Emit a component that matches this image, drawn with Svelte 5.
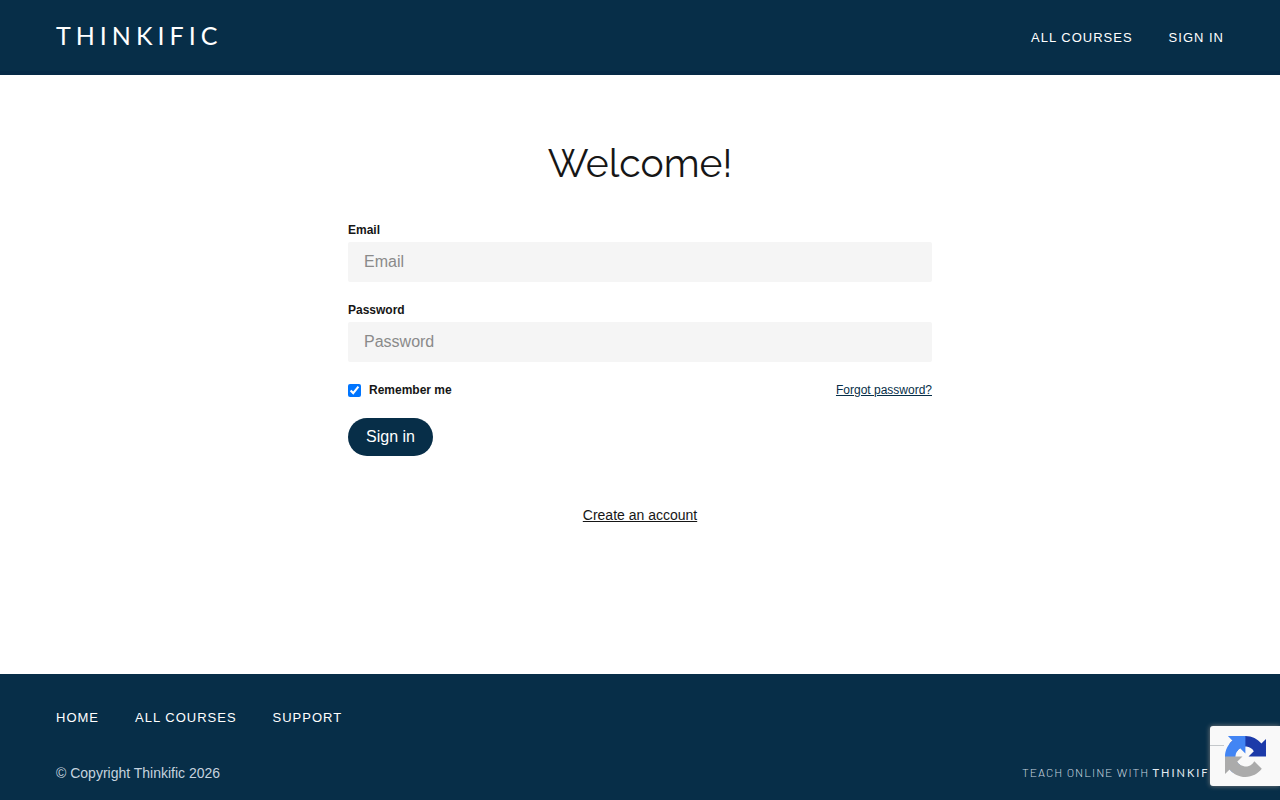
<script>
  const headerLinks = ["All Courses", "Sign In"];
  const footerLinks = ["Home", "All Courses", "Support"];

  let email = $state("");
  let password = $state("");
  let remember = $state(true);
</script>

<div class="page">
  <header class="header">
    <a class="logo" href="/">THINKIFIC</a>
    <nav class="nav">
      {#each headerLinks as link}
        <a href="/">{link}</a>
      {/each}
    </nav>
  </header>

  <main class="main">
    <h1>Welcome!</h1>

    <form class="form" onsubmit={(e) => e.preventDefault()}>
      <div class="field">
        <label for="email">Email</label>
        <input id="email" type="email" placeholder="Email" bind:value={email} />
      </div>
      <div class="field">
        <label for="password">Password</label>
        <input id="password" type="password" placeholder="Password" bind:value={password} />
      </div>
      <div class="options">
        <label class="remember" for="remember">
          <input id="remember" type="checkbox" bind:checked={remember} />
          Remember me
        </label>
        <a class="forgot" href="/">Forgot password?</a>
      </div>
      <button class="submit" type="submit">Sign in</button>
    </form>

    <a class="create" href="/">Create an account</a>
  </main>

  <footer class="footer">
    <nav class="nav">
      {#each footerLinks as link}
        <a href="/">{link}</a>
      {/each}
    </nav>
    <div class="footer-bottom">
      <span class="copyright">© Copyright Thinkific 2026</span>
      <a class="powered" href="/">Teach online with <strong>THINKIFIC</strong></a>
    </div>
  </footer>
</div>

<div class="captcha">
  <svg viewBox="0 0 64 64" width="41" height="41" aria-hidden="true">
    <path fill="#1c3aa9" d="M64 31.955l-.033-1.37V4.687l-7.16 7.16C50.948 4.674 42.033.093 32.05.093c-10.4 0-19.622 4.96-25.458 12.64l11.736 11.86a15.55 15.55 0 0 1 4.754-5.334c2.05-1.6 4.952-2.906 8.968-2.906.485 0 .86.057 1.135.163 4.976.393 9.288 3.14 11.828 7.124l-8.307 8.307L64 31.953" />
    <path fill="#4285f4" d="M31.862.094l-1.37.033H4.594l7.16 7.16C4.58 13.147 0 22.06 0 32.046c0 10.4 4.96 19.622 12.64 25.458L24.5 45.768a15.55 15.55 0 0 1-5.334-4.754c-1.6-2.05-2.906-4.952-2.906-8.968 0-.485.057-.86.163-1.135.393-4.976 3.14-9.288 7.124-11.828l8.307 8.307L31.86.095" />
    <path fill="#ababab" d="M.001 32.045l.033 1.37v25.898l7.16-7.16c5.86 7.173 14.774 11.754 24.76 11.754 10.4 0 19.622-4.96 25.458-12.64l-11.736-11.86a15.55 15.55 0 0 1-4.754 5.334c-2.05 1.6-4.952 2.906-8.968 2.906-.485 0-.86-.057-1.135-.163-4.976-.393-9.288-3.14-11.828-7.124l8.307-8.307c-10.522.04-22.4.066-27.295-.005" />
  </svg>
</div>

<style>
  :global(body) {
    background: #fff;
    color: #161616;
    font-family: "Liberation Sans", Arial, sans-serif;
  }

  .page {
    display: flex;
    flex-direction: column;
    min-height: 100vh;
  }

  .header {
    display: flex;
    justify-content: space-between;
    align-items: flex-start;
    padding: 20px 56px;
    border-bottom: 4px solid #062a46;
    background: #072e48;
  }

  .header .nav {
    padding-top: 8px;
  }

  .logo {
    color: #fff;
    font-family: Lato, sans-serif;
    font-size: 25px;
    line-height: 31px;
    letter-spacing: 5px;
    text-decoration: none;
  }

  .nav {
    display: flex;
    flex-wrap: wrap;
    gap: 36px;
  }

  .nav a {
    color: #fff;
    font-size: 13px;
    line-height: 20px;
    letter-spacing: 1px;
    text-transform: uppercase;
    text-decoration: none;
  }

  .main {
    flex: 1;
    display: flex;
    flex-direction: column;
    align-items: center;
    padding: 64px 24px;
  }

  h1 {
    margin: 0 0 35px;
    font-family: Raleway, Lato, sans-serif;
    font-size: 39px;
    line-height: 48px;
    font-weight: 400;
  }

  .form {
    width: 100%;
    max-width: 584px;
  }

  .field {
    display: flex;
    flex-direction: column;
    gap: 4px;
    margin-bottom: 20px;
  }

  label {
    font-size: 12px;
    line-height: 16px;
    font-weight: 700;
  }

  .field input {
    height: 40px;
    box-sizing: border-box;
    padding: 0 16px;
    border: 0;
    border-radius: 2px;
    background: #f5f5f5;
    color: #161616;
    font-family: inherit;
    font-size: 16px;
  }

  .field input::placeholder {
    color: #8a8a8a;
  }

  .options {
    display: flex;
    justify-content: space-between;
    align-items: center;
    margin-bottom: 20px;
  }

  .remember {
    display: flex;
    align-items: center;
    gap: 8px;
  }

  .remember input {
    width: 13px;
    height: 13px;
    margin: 0;
  }

  .forgot {
    color: #072e48;
    font-size: 12px;
    line-height: 16px;
  }

  .submit {
    height: 38px;
    padding: 0 18px;
    border: 0;
    border-radius: 19px;
    background: #072e48;
    color: #fff;
    font-family: inherit;
    font-size: 16px;
  }

  .create {
    margin-top: 49px;
    color: #161616;
    font-size: 14px;
    line-height: 20px;
  }

  .footer {
    padding: 34px 56px 17px;
    background: #072e48;
  }

  .footer-bottom {
    display: flex;
    justify-content: space-between;
    align-items: center;
    margin-top: 34px;
  }

  .copyright {
    color: #c5d3df;
    font-size: 14px;
    line-height: 20px;
  }

  .powered {
    color: #c5d3df;
    font-family: Barlow, Roboto, sans-serif;
    font-size: 12px;
    line-height: 20px;
    font-weight: 300;
    letter-spacing: 1px;
    text-transform: uppercase;
    text-decoration: none;
  }

  .powered strong {
    color: #e4edf3;
    font-family: Lato, sans-serif;
    font-size: 11px;
    font-weight: 400;
    letter-spacing: 2px;
  }

  .captcha {
    position: fixed;
    right: 0;
    bottom: 14px;
    display: flex;
    width: 70px;
    height: 60px;
    box-sizing: border-box;
    padding: 10px 14px 9px 0;
    border-radius: 3px 0 0 3px;
    background: #f9f9f9;
    box-shadow: 0 0 5px gray;
  }

  .captcha::before {
    content: "";
    width: 14px;
    height: 1px;
    margin: 9px 1px 0 0;
    background: #c4c8cb;
  }

  .captcha svg {
    flex: none;
  }
</style>
